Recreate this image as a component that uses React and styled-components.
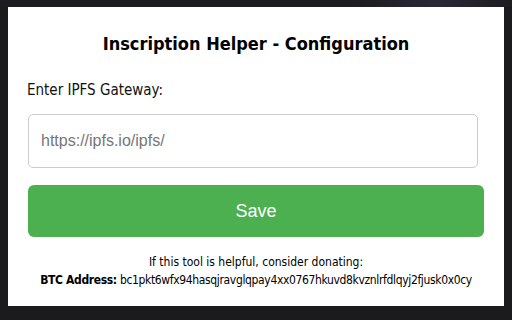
import React from "react";
import styled, { createGlobalStyle } from "styled-components";

const GlobalStyle = createGlobalStyle`
  html, body {
    margin: 0;
    padding: 0;
    background: #1d1c20;
  }
  * {
    box-sizing: border-box;
  }
`;

const Screen = styled.div`
  width: 512px;
  height: 320px;
  padding: 7px 8px 14px 8px;
  background: linear-gradient(to right, #1d1c20 0%, #1d1c20 70%, #2a2836 85%, #1d1c20 100%);
  background-size: 100% 7px;
  background-repeat: no-repeat;
  background-color: #1b1b1e;
`;

const Panel = styled.div`
  background: #fff;
  width: 496px;
  height: 299px;
  display: flex;
  flex-direction: column;
  padding: 0 20px 0 20px;
  font-family: "DejaVu Sans Condensed", "DejaVu Sans", sans-serif;
  color: #111;
`;

const Title = styled.h1`
  margin: 26px 0 0 0;
  font-size: 18px;
  line-height: 22px;
  font-weight: bold;
  text-align: center;
  color: #000;
`;

const Label = styled.label`
  margin-top: 26px;
  margin-left: -1px;
  font-size: 15px;
  line-height: 18px;
`;

const Input = styled.input`
  margin-top: 15px;
  width: 450px;
  height: 54px;
  border: 1px solid #ccc;
  border-radius: 5px;
  padding: 0 12px;
  font-family: "Liberation Sans", Arial, sans-serif;
  font-size: 16px;
  color: #333;
  outline: none;
  &::placeholder {
    color: #767676;
  }
`;

const SaveButton = styled.button`
  margin-top: 17px;
  width: 456px;
  height: 52px;
  border: none;
  border-radius: 6px;
  background: #4caf50;
  color: #fff;
  font-family: "Liberation Sans", Arial, sans-serif;
  font-size: 18px;
  cursor: pointer;
`;

const Donate = styled.div`
  margin-top: 16px;
  text-align: center;
  font-size: 12px;
  line-height: 18px;
  white-space: nowrap;
  color: #000;
`;

const Line = styled.div`
  letter-spacing: ${(props) => props.$tight ? "-0.35px" : "0"};
`;

const Strong = styled.strong`
  font-weight: bold;
`;

export default function App() {
  return (
    <>
      <GlobalStyle />
      <Screen>
        <Panel>
          <Title>Inscription Helper - Configuration</Title>
          <Label htmlFor="gateway">Enter IPFS Gateway:</Label>
          <Input id="gateway" placeholder="https://ipfs.io/ipfs/" />
          <SaveButton>Save</SaveButton>
          <Donate>
            <Line>If this tool is helpful, consider donating:</Line>
            <Line $tight>
              <Strong>BTC Address:</Strong> bc1pkt6wfx94hasqjravglqpay4xx0767hkuvd8kvznlrfdlqyj2fjusk0x0cy
            </Line>
          </Donate>
        </Panel>
      </Screen>
    </>
  );
}
